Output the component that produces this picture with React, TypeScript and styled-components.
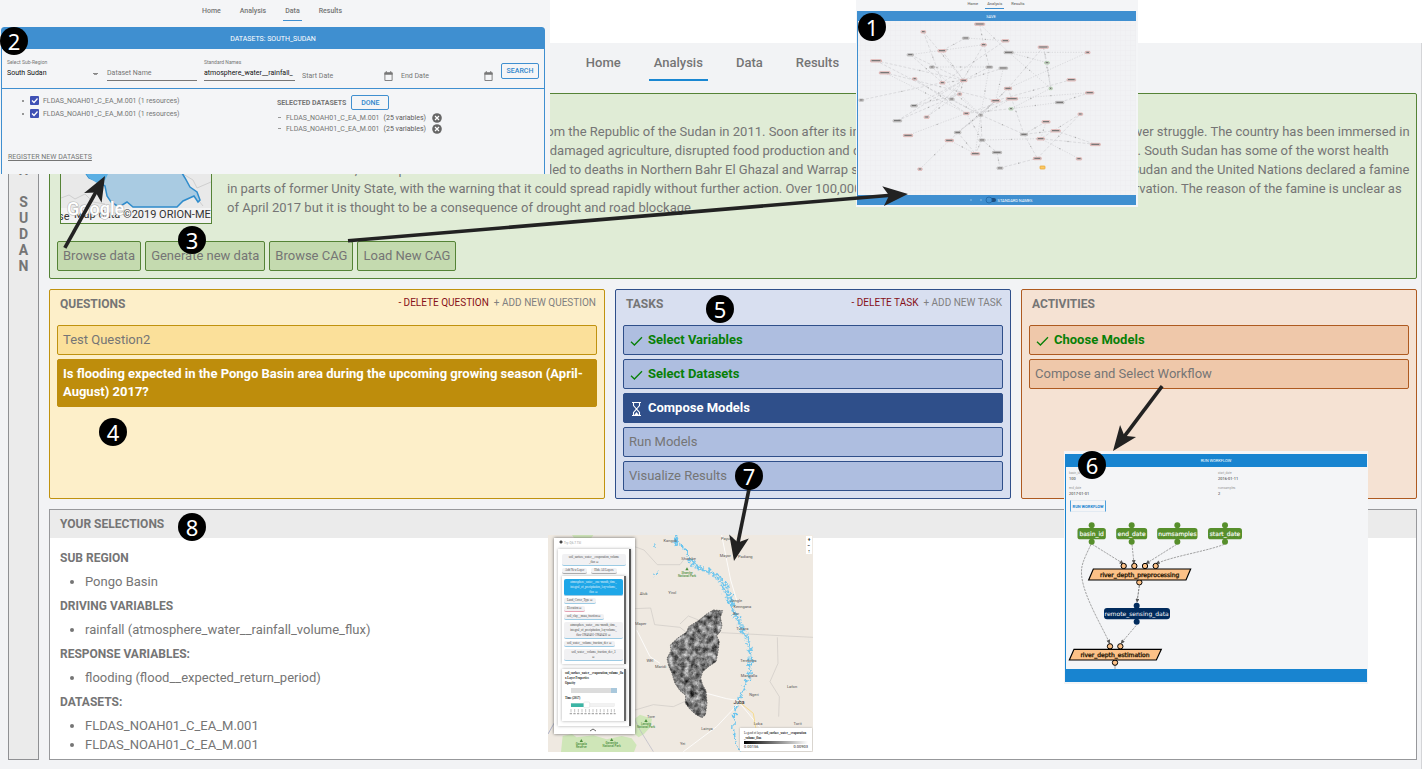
import React from "react";
import styled, { createGlobalStyle, css } from "styled-components";

const GlobalStyle = createGlobalStyle`
  * { box-sizing: border-box; }
  body { margin: 0; background: #fff; font-family: Roboto, "Liberation Sans", sans-serif; font-size: 13px; color: #757575; }
  button, input, select { font: inherit; color: inherit; margin: 0; }
  ul { list-style: none; margin: 0; padding: 0; }
  h2, h3, p { margin: 0; font-size: inherit; }
  a { color: inherit; text-decoration: none; }
`;

/* ---------- page ---------- */

const Page = styled.div`
  position: relative;
  display: flex;
  flex-direction: column;
  min-height: 100vh;
  padding: 43px 1px 0 0;
  overflow: hidden;
`;
const AppShell = styled.div`
  flex: 1;
  display: flex;
  flex-direction: column;
  background: #f2f3f5;
  border-right: 1px solid #d4d5d8;
  padding: 0 4px 10px 8px;
`;
const Nav = styled.nav`
  display: flex;
  justify-content: center;
  align-items: flex-start;
  gap: 23px;
  height: 50px;
  padding-top: 11px;
`;
const Tab = styled.a<{ $active?: boolean }>`
  padding: 0 5px 7px;
  line-height: 18px;
  font-weight: 500;
  border-bottom: 2px solid ${(p) => (p.$active ? "#1a87d2" : "transparent")};
`;
const Body = styled.div`
  flex: 1;
  display: flex;
  gap: 10px;
`;
const Sidebar = styled.aside`
  flex: none;
  width: 31px;
  padding-top: 4px;
  background: #ebebeb;
  border: 1px solid #8f9093;
  display: flex;
  flex-direction: column;
  align-items: center;
  font-size: 14px;
  line-height: 16px;
  font-weight: 700;
`;
const Letter = styled.span`
  height: 16px;
`;
const Main = styled.main`
  flex: 1;
  min-width: 0;
  display: flex;
  flex-direction: column;
  gap: 10px;
`;

/* ---------- region summary ---------- */

const Summary = styled.section`
  background: #e0ecd6;
  border: 1px solid #558336;
  border-radius: 2px;
  padding: 7px;
`;
const SummaryRow = styled.div`
  display: flex;
  gap: 15px;
  padding: 20px 0 17px 3px;
`;
const MapThumb = styled.div`
  flex: none;
  width: 152px;
  height: 103px;
  border: 1px solid #558336;
  overflow: hidden;
`;
const Story = styled.p`
  flex: 1;
  min-width: 0;
  padding-top: 1px;
  line-height: 19px;
`;
const Line = styled.span`
  display: block;
  white-space: nowrap;
`;
const Actions = styled.div`
  display: flex;
  gap: 4px;
`;
const ActionButton = styled.button`
  padding: 5px;
  line-height: 18px;
  background: #c4daaf;
  border: 1px solid #558336;
  border-radius: 2px;
`;

/* ---------- panels ---------- */

type Tone = "gold" | "blue" | "rust";
const tones = {
  gold: { bg: "#fdefc9", item: "#fbe09a", edge: "#c0920f", on: "#be8d0c" },
  blue: { bg: "#d8dff0", item: "#aebee0", edge: "#2f4f8a", on: "#2f4f8a" },
  rust: { bg: "#f5e2d3", item: "#efc8aa", edge: "#ae5a20", on: "#ae5a20" },
};

const Panels = styled.div`
  display: grid;
  grid-template-columns: 139fr 99fr 99fr;
  gap: 10px;
`;
const Panel = styled.section<{ $tone: Tone }>`
  background: ${(p) => tones[p.$tone].bg};
  border: 1px solid ${(p) => tones[p.$tone].edge};
  border-radius: 2px;
  padding: 4px 7px 7px;
`;
const PanelHead = styled.header`
  display: flex;
  justify-content: space-between;
  height: 31px;
  padding: 0 1px 0 3px;
  line-height: 20px;
`;
const PanelTitle = styled.h2`
  font-weight: 700;
  font-size: 12px;
`;
const PanelLinks = styled.div`
  display: flex;
  gap: 5px;
`;
const LinkButton = styled.button<{ $danger?: boolean }>`
  padding: 0;
  border: 0;
  background: none;
  height: 18px;
  line-height: 18px;
  font-size: 10px;
  color: ${(p) => (p.$danger ? "#861018" : "#808080")};
`;
const Items = styled.ul`
  display: flex;
  flex-direction: column;
  gap: 4px;
`;
const ItemButton = styled.button<{ $tone: Tone; $state?: "done" | "on" }>`
  display: flex;
  align-items: center;
  gap: 5px;
  width: 100%;
  padding: 5px;
  line-height: 18px;
  text-align: left;
  border-radius: 2px;
  border: 1px solid ${(p) => tones[p.$tone].edge};
  background: ${(p) => tones[p.$tone].item};
  ${(p) => p.$state === "done" && css`color: #078007; font-weight: 700;`}
  ${(p) => p.$state === "on" && css`color: #fff; font-weight: 700; background: ${tones[p.$tone].on}; border-color: ${tones[p.$tone].on};`}
`;

const Check = () => (
  <svg width="14" height="14" viewBox="0 0 14 14" fill="none" stroke="#078007" strokeWidth="1.3" aria-hidden="true">
    <path d="M2 8.8 5.4 12 13 4.2" />
  </svg>
);
const Hourglass = () => (
  <svg width="14" height="16" viewBox="0 0 14 16" fill="none" stroke="#fff" strokeWidth="1.1" aria-hidden="true">
    <path d="M3 2.5h9M3 15.5h9M4.5 2.5v3L7 8.5c.4.4.4.8 0 1.2L4.500 12.500v3M10.500 2.500v3L8 8.500c-.4.4-.4.8 0 1.200l2.500 2.800v3" />
    <path d="M5 15.300 7.500 12l2.500 3.300Z" fill="#fff" stroke="none" />
  </svg>
);

/* ---------- selections ---------- */

const Selections = styled.section`
  flex: 1;
  background: #fff;
  border: 1px solid #97989b;
`;
const SelectionsHead = styled.h2`
  padding: 4px 10px;
  line-height: 20px;
  font-size: 12px;
  font-weight: 700;
  background: #ebebeb;
`;
const SelectionsBody = styled.div`
  padding: 10px 10px 0;
  line-height: 19px;
`;
const GroupTitle = styled.h3`
  font-size: 12px;
  font-weight: 700;
  line-height: 20px;
`;
const GroupList = styled.ul`
  list-style: disc;
  padding: 4px 0 5px 25px;
`;

/* ---------- overlays ---------- */

const Overlay = styled.section<{ $x: number; $y: number; $w: number; $h: number }>`
  position: absolute;
  left: ${(p) => p.$x}px;
  top: ${(p) => p.$y}px;
  width: ${(p) => p.$w}px;
  height: ${(p) => p.$h}px;
  background: #f4f5f7;
  overflow: hidden;
`;
const Badge = styled.span<{ $x: number; $y: number }>`
  position: absolute;
  left: ${(p) => p.$x}px;
  top: ${(p) => p.$y}px;
  width: 28px;
  height: 28px;
  border-radius: 50%;
  background: #000;
  color: #fff;
  font: 22px/28px "Noto Sans", sans-serif;
  text-align: center;
`;
const ArrowLayer = styled.svg`
  position: absolute;
  left: 0;
  top: 0;
  pointer-events: none;
`;

const Arrow = ({ from, to }: { from: [number, number]; to: [number, number] }) => {
  const angle = (Math.atan2(to[1] - from[1], to[0] - from[0]) * 180) / Math.PI;
  const len = Math.hypot(to[0] - from[0], to[1] - from[1]);
  return (
    <g transform={`translate(${to[0]} ${to[1]}) rotate(${angle})`} fill="#222">
      <rect x={-len} y={-2} width={len - 17} height={3.600} />
      <path d="M0 0-25-10-19 0-25 10Z" />
    </g>
  );
};

/* dataset browser */
const MiniNav = styled.nav<{ $size: number; $gap: number; $h: number; $end: number }>`
  display: flex;
  justify-content: center;
  gap: ${(p) => p.$gap}px;
  height: ${(p) => p.$h}px;
  padding-right: ${(p) => p.$end}px;
  font-size: ${(p) => p.$size}px;
  font-weight: 500;
`;
const MiniTab = styled.a<{ $active?: boolean; $h: number; $line: number }>`
  height: ${(p) => p.$h}px;
  line-height: ${(p) => p.$line}px;
  padding: 0 2px;
  border-bottom: 1px solid ${(p) => (p.$active ? "#3f8fd0" : "transparent")};
`;
const DataFrame = styled.div`
  height: 150px;
  margin: 0 5px 0 1px;
  border: 1px solid #3f8fd0;
  border-radius: 3px 3px 0 0;
  font-size: 7px;
`;
const DataTitle = styled.h2`
  height: 21px;
  line-height: 22px;
  background: #3f8fd0;
  color: #fff;
  font-weight: 400;
  text-align: center;
`;
const SearchForm = styled.form`
  display: grid;
  grid-template-columns: 93px 90px 91px 92px 93px 38px;
  align-items: start;
  column-gap: 7px;
  height: 40px;
  padding: 9px 5px 0;
  border-bottom: 1px solid #3f8fd0;
`;
const Field = styled.label`
  display: flex;
  flex-direction: column;
  height: 23px;
  font-size: 5px;
  line-height: 8px;
`;
const FieldCaption = styled.span`
  flex: none;
  height: 8px;
`;
const TinyInput = styled.input<{ $line?: boolean }>`
  width: 100%;
  height: 16px;
  padding: 0;
  border: 0;
  border-bottom: 1px solid ${(p) => (p.$line ? "#777" : "transparent")};
  background: none;
  font-size: 7px;
  color: #111;
  &::placeholder { color: #757575; opacity: 1; }
`;
const TinySelect = styled.select`
  appearance: none;
  width: 100%;
  height: 14px;
  padding: 0;
  border: 0;
  background: linear-gradient(#888, #888) no-repeat 86px 7px / 5px 1px, linear-gradient(#999, #999) no-repeat 87px 8px / 3px 1px;
  font-size: 7px;
  color: #111;
`;
const DateBox = styled.span`
  flex: none;
  display: flex;
  align-items: center;
  height: 20px;
  padding-right: 1px;
`;
const OutlineButton = styled.button<{ $h: number }>`
  height: ${(p) => p.$h}px;
  width: 38px;
  padding: 0;
  border: 1px solid #3f8fd0;
  border-radius: 2px;
  background: none;
  color: #2f86cc;
  font-size: 7px;
  font-weight: 500;
`;
const SearchSlot = styled.div`
  padding-top: 5px;
`;
const DataColumns = styled.div`
  display: grid;
  grid-template-columns: 270px 1fr;
  height: 62px;
  padding: 5px 5px 0;
`;
const Resources = styled.ul`
  padding: 0 0 0 15px;
`;
const ResourceRow = styled.li`
  display: flex;
  align-items: center;
  height: 13px;
  gap: 4px;
  &::before { content: ""; width: 2px; height: 2px; border-radius: 1px; background: #777; margin-right: 2px; }
`;
const Tick = styled.input`
  appearance: none;
  width: 9px;
  height: 9px;
  border-radius: 1px;
  background: #3f51b5;
  background-image: url("data:image/svg+xml,%3Csvg xmlns='http://www.w3.org/2000/svg' viewBox='0 0 9 9'%3E%3Cpath d='M2 4.500 4 6.500 7.500 2.500' fill='none' stroke='white' stroke-width='1.200'/%3E%3C/svg%3E");
`;
const TickLabel = styled.label`
  display: flex;
  align-items: center;
  gap: 4px;
`;
const ChosenHead = styled.div`
  display: flex;
  align-items: center;
  gap: 5px;
  height: 17px;
  margin-bottom: 1px;
  font-weight: 700;
`;
const ChosenRow = styled.li`
  display: flex;
  align-items: center;
  height: 11px;
  &::before { content: ""; width: 3px; height: 1px; background: #999; margin: 0 5px 0 1px; }
`;
const Strong = styled.span`
  color: #5c5c5c;
  margin: 0 6px 0 4px;
`;
const IconButton = styled.button`
  display: flex;
  padding: 0;
  border: 0;
  background: none;
`;
const Register = styled.a`
  margin-left: 6px;
  line-height: 12px;
  text-decoration: underline;
`;

const CalendarIcon = () => (
  <svg width="10" height="12" viewBox="0 0 10 12" aria-hidden="true">
    <path d="M1 2.500h8v8.500H1z" fill="none" stroke="#777" />
    <path d="M.5 2h9v2.500h-9zM2 .5h1v2H2zM7 .5h1v2H7z" fill="#777" />
  </svg>
);
const RemoveIcon = () => (
  <svg width="10" height="10" viewBox="0 0 10 10" aria-hidden="true">
    <circle cx="5" cy="5" r="4.800" fill="#666" />
    <path d="m3 3 4 4M7 3 3 7" stroke="#fff" strokeWidth="1.200" />
  </svg>
);

const DatasetBrowser = () => (
  <Overlay $x={0} $y={0} $w={550} $h={174}>
    <MiniNav $size={7} $gap={15} $h={27} $end={6}>
      <MiniTab href="#" $h={21} $line={22}>Home</MiniTab>
      <MiniTab href="#" $h={21} $line={22}>Analysis</MiniTab>
      <MiniTab href="#" $h={21} $line={22} $active>Data</MiniTab>
      <MiniTab href="#" $h={21} $line={22}>Results</MiniTab>
    </MiniNav>
    <DataFrame>
      <DataTitle>DATASETS: SOUTH_SUDAN</DataTitle>
      <SearchForm>
        <Field>
          <FieldCaption>Select Sub-Region</FieldCaption>
          <TinySelect defaultValue="ss"><option value="ss">South Sudan</option></TinySelect>
        </Field>
        <Field>
          <FieldCaption />
          <TinyInput $line placeholder="Dataset Name" aria-label="Dataset Name" />
        </Field>
        <Field>
          <FieldCaption>Standard Names</FieldCaption>
          <TinyInput $line defaultValue="atmosphere_water__rainfall_" />
        </Field>
        <Field>
          <FieldCaption />
          <DateBox><TinyInput placeholder="Start Date" aria-label="Start Date" /><CalendarIcon /></DateBox>
        </Field>
        <Field>
          <FieldCaption />
          <DateBox><TinyInput placeholder="End Date" aria-label="End Date" /><CalendarIcon /></DateBox>
        </Field>
        <SearchSlot><OutlineButton type="button" $h={16}>SEARCH</OutlineButton></SearchSlot>
      </SearchForm>
      <DataColumns>
        <Resources>
          {[0, 1].map((i) => (
            <ResourceRow key={i}>
              <TickLabel><Tick type="checkbox" defaultChecked />FLDAS_NOAH01_C_EA_M.001 (1 resources)</TickLabel>
            </ResourceRow>
          ))}
        </Resources>
        <div>
          <ChosenHead>SELECTED DATASETS<OutlineButton type="button" $h={15}>DONE</OutlineButton></ChosenHead>
          <ul>
            {[0, 1].map((i) => (
              <ChosenRow key={i}>
                FLDAS_NOAH01_C_EA_M.001 <Strong>(25 variables)</Strong>
                <IconButton aria-label="Remove dataset"><RemoveIcon /></IconButton>
              </ChosenRow>
            ))}
          </ul>
        </div>
      </DataColumns>
      <Register href="#">REGISTER NEW DATASETS</Register>
    </DataFrame>
  </Overlay>
);

/* causal graph */
const GraphBar = styled.div<{ $h: number }>`
  display: flex;
  align-items: center;
  justify-content: center;
  height: ${(p) => p.$h}px;
  padding-right: 12px;
  background: #3f8fd0;
  color: #fff;
  font-size: 4px;
`;
const GraphFrame = styled.div`
  margin: 0 2px 0 1px;
  border-left: 1px solid #3f8fd0;
`;
const Drawing = styled.svg`
  display: block;
`;

const RED = "#d98b87";
const GRAY = "#9a9a9a";
const GREEN = "#83bb7c";
const nodes: [number, number, number, string][] = [
  [389, 72, 30, RED], [220, 95, 14, RED], [347, 114, 20, GRAY], [401, 134, 16, RED], [466, 122, 22, RED],
  [181, 164, 19, GRAY], [276, 152, 24, RED], [476, 157, 28, GRAY], [580, 141, 31, RED], [713, 157, 14, RED],
  [78, 182, 33, RED], [104, 218, 32, RED], [246, 201, 15, GRAY], [418, 201, 20, GRAY], [460, 204, 26, GRAY],
  [591, 188, 14, GREEN], [194, 236, 13, RED], [277, 248, 15, RED], [341, 241, 20, RED], [474, 265, 22, RED],
  [602, 265, 10, GREEN], [664, 239, 26, RED], [719, 278, 25, RED], [34, 300, 14, GRAY], [192, 317, 20, GRAY],
  [305, 297, 15, GRAY], [329, 282, 12, RED], [437, 302, 26, RED], [486, 296, 34, RED], [483, 326, 12, GREEN],
  [629, 307, 26, GRAY], [142, 362, 26, GRAY], [230, 351, 15, RED], [349, 340, 17, RED], [392, 345, 12, GRAY],
  [588, 365, 24, RED], [691, 342, 14, RED], [174, 406, 28, RED], [323, 397, 20, GRAY], [298, 421, 25, RED],
  [396, 420, 18, GRAY], [522, 403, 22, GRAY], [572, 416, 23, RED], [617, 392, 28, RED], [736, 433, 30, RED],
  [376, 461, 26, RED], [441, 457, 28, GRAY], [562, 475, 24, RED], [687, 476, 16, RED], [450, 504, 18, GRAY],
  [210, 507, 13, RED],
];
const edges: [number, number][] = [
  [0, 7], [0, 3], [1, 17], [2, 4], [2, 6], [3, 13], [5, 3], [5, 17], [6, 18], [7, 20], [8, 19], [8, 15], [9, 19],
  [10, 18], [11, 27], [12, 34], [13, 18], [14, 18], [13, 34], [15, 20], [16, 33], [17, 34], [17, 18], [18, 24],
  [18, 32], [19, 27], [19, 34], [20, 29], [21, 27], [22, 30], [22, 28], [23, 17], [24, 26], [25, 34], [27, 34],
  [27, 38], [28, 34], [28, 33], [29, 33], [30, 29], [31, 26], [31, 18], [33, 40], [34, 41], [34, 40], [34, 45],
  [35, 41], [36, 42], [35, 42], [43, 41], [43, 44], [37, 33], [38, 34], [39, 27], [39, 45], [40, 45], [41, 47],
  [42, 48], [46, 49], [49, 47], [40, 42], [42, 44], [19, 41], [7, 15], [1, 18], [18, 5], [14, 27], [3, 25],
  [4, 17], [12, 13], [26, 18], [32, 25], [50, 39], [38, 45], [40, 46], [9, 7], [8, 20], [47, 36], [11, 33], [10, 34],
];

const CausalGraph = () => (
  <Overlay $x={856} $y={0} $w={282} $h={207}>
    <MiniNav $size={4} $gap={5} $h={11} $end={2}>
      <MiniTab href="#" $h={9} $line={8}>Home</MiniTab>
      <MiniTab href="#" $h={9} $line={8} $active>Analysis</MiniTab>
      <MiniTab href="#" $h={9} $line={8}>Results</MiniTab>
    </MiniNav>
    <GraphFrame>
      <GraphBar $h={10}>SAVE</GraphBar>
      <Drawing width="278" height="174" viewBox="24 63 834 522" aria-label="Causal graph">
        <defs>
          <pattern id="grid" width="15" height="15" patternUnits="userSpaceOnUse">
            <path d="M0 .5h15M.5 0v15" stroke="#e9eaed" strokeWidth="1.500" fill="none" />
          </pattern>
        </defs>
        <rect x="24" y="63" width="834" height="522" fill="#f1f2f4" />
        <rect x="24" y="63" width="834" height="522" fill="url(#grid)" />
        {edges.map(([a, b], i) => (
          <g key={i}>
            <line x1={nodes[a][0]} y1={nodes[a][1]} x2={nodes[b][0]} y2={nodes[b][1]} stroke="#cbcbce" strokeWidth="1.800" strokeDasharray={i % 3 ? "9 5" : "4 4"} />
            <circle cx={(nodes[a][0] + nodes[b][0]) / 2} cy={(nodes[a][1] + nodes[b][1]) / 2} r="2" fill="#aaa" />
          </g>
        ))}
        {nodes.map(([x, y, w, c], i) => (
          <g key={i}>
            <rect x={x - w / 2} y={y - 3} width={w} height="7" rx="2" fill="#d9d5d5" stroke={c} strokeWidth="1.500" />
            <line x1={x - w / 2 + 3} x2={x + w / 2 - 3} y1={y} y2={y} stroke="#666" strokeWidth="3" />
          </g>
        ))}
        <rect x="570" y="498" width="15" height="9" rx="2" fill="#fbc96a" stroke="#e9a21f" strokeWidth="2" />
      </Drawing>
      <GraphBar $h={10}>
        <svg width="48" height="8" viewBox="0 0 48 8" aria-hidden="true">
          <path d="M20 4h2M30 4h2" stroke="#8dbbe2" />
          <rect x="38" y="2" width="8" height="4" rx="2" fill="#1d4f80" />
          <circle cx="39" cy="4" r="3" fill="#3f8fd0" stroke="#1f66a5" strokeWidth=".8" />
        </svg>
        STANDARD NAMES
      </GraphBar>
    </GraphFrame>
  </Overlay>
);

/* workflow */
const FlowFrame = styled.div`
  margin: 3px 1px 0 1px;
`;
const FlowBar = styled.h2`
  height: 13px;
  line-height: 13px;
  background: #1884d0;
  color: #fff;
  text-align: center;
  font-size: 4px;
  font-weight: 400;
`;
const FlowBody = styled.div`
  height: 202px;
  border-left: 1px solid #1884d0;
`;
const FlowFields = styled.dl`
  display: grid;
  grid-template-columns: 1fr 1fr;
  margin: 0;
  padding: 3px 0 0 3px;
  height: 33px;
`;
const FlowField = styled.div`
  height: 15px;
  font-size: 4px;
  line-height: 6px;
`;
const Term = styled.dt`
  color: #999;
  font-size: 3px;
`;
const Value = styled.dd`
  margin: 0;
  color: #333;
`;
const FlowButton = styled.button`
  display: block;
  margin: 0 0 0 4px;
  width: 36px;
  height: 12px;
  padding: 0;
  border: 1px solid #4ea0dc;
  border-top-color: #e2eaf2;
  border-bottom-color: #e2eaf2;
  background: none;
  color: #1884d0;
  font-size: 4px;
  font-weight: 700;
`;
const inputs: [number, number, string][] = [[110, 85, "basin_id"], [230, 93, "end_date"], [367, 121, "numsamples"], [510, 102, "start_date"]];
const Port = ({ x, y }: { x: number; y: number }) => <circle cx={x} cy={y} r="8" fill="#fcc187" stroke="#000" strokeWidth="3" />;

const Workflow = () => (
  <Overlay $x={1064} $y={451} $w={304} $h={233}>
    <FlowFrame>
      <FlowBar>RUN WORKFLOW</FlowBar>
      <FlowBody>
        <FlowFields>
          <FlowField><Term>basin_id</Term><Value>100</Value></FlowField>
          <FlowField><Term>start_date</Term><Value>2016-01-11</Value></FlowField>
          <FlowField><Term>end_date</Term><Value>2017-01-01</Value></FlowField>
          <FlowField><Term>numsamples</Term><Value>2</Value></FlowField>
        </FlowFields>
        <FlowButton>RUN WORKFLOW</FlowButton>
        <Drawing width="200" height="157" viewBox="33 199 600 471" fontFamily="DejaVu Sans" fontSize="18" textAnchor="middle" aria-label="Workflow diagram">
          <defs>
            <marker id="tip" viewBox="0 0 10 10" refX="9" refY="5" markerWidth="14" markerHeight="12" markerUnits="userSpaceOnUse" orient="auto">
              <path d="M0 0 10 5 0 10Z" fill="#555" />
            </marker>
          </defs>
          <g fill="none" stroke="#777" strokeWidth="2" strokeDasharray="7 3" markerEnd="url(#tip)">
            <path d="M112 296 205 354" />
            <path d="M231 296 237 354" />
            <path d="M365 296 273 354" />
            <path d="M508 296C450 318 360 330 303 354" />
            <path d="M108 296C85 345 77 360 80 390C85 450 140 540 164 593" />
            <path d="M253 420 246 470" stroke="#333" />
            <path d="M243 540 198 593" />
          </g>
          <path d="M180 658v14" stroke="#777" strokeWidth="2" />
          {inputs.map(([x, w, name]) => (
            <g key={name}>
              <g fill="#578f2c">
                <circle cx={x} cy="239" r="9" /><circle cx={x} cy="288" r="9" />
                <rect x={x - w / 2} y="247" width={w} height="34" rx="8" />
              </g>
              <text x={x} y="271" fill="#fff" stroke="#fff" strokeWidth=".4">{name}</text>
            </g>
          ))}
          {[206, 238, 270, 302].map((x) => <Port key={x} x={x} y={361} />)}
          <Port x={253} y={410} />
          <path d="M115 370H407L393 403H101Z" fill="#fcc187" stroke="#000" strokeWidth="3.500" />
          <text x="254" y="393" fill="#2a1a08" stroke="#2a1a08" strokeWidth="1">river_depth_preprocessing</text>
          <g fill="#012b5d">
            <circle cx="245" cy="480" r="9" /><circle cx="245" cy="528" r="9" />
            <rect x="147" y="487" width="198" height="34" rx="9" />
          </g>
          <text x="245" y="511" fill="#fff">remote_sensing_data</text>
          {[165, 196].map((x) => <Port key={x} x={x} y={602} />)}
          <Port x={180} y={651} />
          <path d="M57 611H319L304 643H43Z" fill="#fcc187" stroke="#000" strokeWidth="3.500" />
          <text x="180" y="634" fill="#2a1a08" stroke="#2a1a08" strokeWidth="1">river_depth_estimation</text>
        </Drawing>
      </FlowBody>
      <FlowBar as="div" />
    </FlowFrame>
  </Overlay>
);

/* results map */
const MapCanvas = styled.div`
  position: relative;
  width: 265px;
  height: 217px;
`;
const LayerPanel = styled.div`
  position: absolute;
  left: 6px;
  top: 3px;
  width: 81px;
  height: 196px;
  padding: 1px 4px 0 4px;
  background: #fff;
  box-shadow: 0 0 3px #666;
  font: 3px/5px "Liberation Serif", serif;
  color: #444;
`;
const LayerSearch = styled.input`
  display: block;
  width: 60px;
  height: 7px;
  margin-left: 1px;
  padding: 0 0 0 5px;
  border: 0;
  background: radial-gradient(circle at 2px 3px, #444 1px, transparent 2px);
  font: 3px Roboto, sans-serif;
  &::placeholder { color: #999; opacity: 1; }
`;
const LayerScroll = styled.div`
  height: 177px;
  margin-top: 3px;
  padding: 5px 3px 0 4px;
  border-right: 2px solid #555;
  box-shadow: 0 0 3px #aaa;
`;
const Chip = styled.button<{ $on?: boolean; $edge?: string; $wide?: boolean }>`
  display: block;
  width: ${(p) => (p.$wide ? "100%" : "auto")};
  padding: ${(p) => (p.$wide ? "1px 1px 0" : "0 3px")};
  border: 0;
  border-bottom: 1px solid ${(p) => p.$edge ?? "#9ccbe4"};
  border-radius: 2px;
  background: ${(p) => (p.$on ? "#1ea7e8" : "#f1f1f3")};
  color: ${(p) => (p.$on ? "#e9f6fd" : "#444")};
  font: 3px/5px "Liberation Serif", serif;
  text-align: center;
  white-space: nowrap;
`;
const ChipRow = styled.div`
  display: flex;
  gap: 4px;
  margin: 2px 0;
`;
const LayerList = styled.div`
  display: flex;
  flex-direction: column;
  align-items: flex-start;
  gap: 2px;
  height: 88px;
  padding: 3px 1px 0 2px;
  border-right: 2px solid #666;
  box-shadow: 0 0 3px #aaa;
  overflow: hidden;
`;
const LayerProps = styled.div`
  margin-top: 5px;
  height: 52px;
  padding: 2px 3px 0;
  border-right: 2px solid #666;
  box-shadow: 0 0 3px #aaa;
  color: #222;
  white-space: nowrap;
`;
const Bold = styled.b`
  display: block;
`;
const Opacity = styled.div`
  height: 5px;
  margin: 2px 4px 3px 6px;
  background: linear-gradient(90deg, #dcdcdc 88%, #a9c8dc 88%);
`;
const Legend = styled.div`
  position: absolute;
  right: 1px;
  bottom: 1px;
  width: 72px;
  height: 23px;
  padding: 3px 4px 0;
  background: #fff;
  box-shadow: 0 0 2px #aaa;
  font: 3px/5px "Liberation Serif", serif;
  color: #222;
  white-space: nowrap;
`;
const Ramp = styled.div`
  height: 3px;
  background: linear-gradient(90deg, #000, #fff);
`;
const RampLabels = styled.div`
  display: flex;
  justify-content: space-between;
  font: 400 4px/5px Roboto, sans-serif;
`;
const ZoomControl = styled.div`
  position: absolute;
  right: 1px;
  top: 1px;
  width: 6px;
  display: flex;
  flex-direction: column;
  background: #fff;
`;
const ZoomButton = styled.button`
  padding: 0;
  border: 0;
  background: none;
  color: #222;
  font-size: 5px;
  font-weight: 700;
  line-height: 6px;
`;

const places: [number, number, string][] = [
  [391, 36, "Kangok"], [446, 91, "Shambe"], [397, 193, "Yirol"], [311, 194, "Aluk"], [302, 284, "Maper"], [330, 397, "WEI"],
  [362, 415, "Maridi"], [561, 30, "Payuel"], [556, 80, "Mayor"], [616, 85, "Padiang"], [588, 215, "Jongle"], [607, 233, "Kenngana"],
  [588, 256, "Bor"], [607, 300, "Tukara"], [625, 396, "Terekeka"], [627, 441, "Mangalla"], [642, 498, "Ngeri"], [756, 473, "Lafon"],
  [773, 586, "Torit"], [654, 586, "Loka"], [501, 599, "Lainya"], [428, 644, "Yei"], [333, 565, "Tore"],
];
const parks: [number, number, string, string][] = [
  [441, 131, "Shambe", "National Park"], [318, 586, "Lantoto", "National Park"], [124, 646, "Gangala", "Reserve"], [215, 643, "Garamba", "National Park"],
];
const RIVER = "M405 12 412 38 438 62 450 92 470 112 505 122 535 146 555 178 570 212 580 240 592 262 600 292 618 316 630 350 632 400 628 440 612 475 598 508 584 545 581 600 588 635 602 668";
const BASIN = "M520 240 548 242 541 262 546 285 541 305 530 317 538 335 534 365 528 395 508 408 488 425 482 445 488 465 498 482 501 520 496 555 486 563 468 554 450 538 436 520 437 496 420 482 405 460 395 428 386 408 381 385 393 362 391 345 412 325 440 306 446 290 475 272 500 252Z";

const ResultsMap = () => (
  <Overlay $x={548} $y={535} $w={265} $h={217}>
    <MapCanvas>
      <Drawing width="265" height="217" viewBox="24 15 795 651" aria-label="Results map">
        <defs>
          <filter id="terrain" x="0" y="0" width="100%" height="100%" colorInterpolationFilters="sRGB">
            <feTurbulence type="fractalNoise" baseFrequency=".06" numOctaves="5" seed="8" />
            <feColorMatrix values="0 1.100 0 0 -.06  0 1.100 0 0 -.06  0 1.100 0 0 -.06  0 0 0 0 1" />
            <feComposite in2="SourceGraphic" operator="in" />
          </filter>
          <filter id="braid" x="-20%" y="-5%" width="140%" height="110%">
            <feTurbulence type="fractalNoise" baseFrequency=".07" numOctaves="3" seed="3" />
            <feDisplacementMap in="SourceGraphic" scale="26" xChannelSelector="R" yChannelSelector="G" />
          </filter>
        </defs>
        <rect x="24" y="15" width="795" height="651" fill="#efe9e1" />
        <g fill="#cfe6b8">
          <path d="M63 666 68 618 96 612 110 622 160 616 200 628 245 618 275 625 290 645 282 666Z" />
          <path d="M284 566 300 554 336 566 332 590 312 612 296 622 284 612Z" />
          <path d="M96 15h64l-6 9h-52z" />
        </g>
        <g fill="none" stroke="#cdc8c4" strokeWidth="2">
          <path d="M284 50 312 60 352 104 420 104 432 88" />
          <path d="M284 236 332 234 344 284 420 292 440 308" />
          <path d="M420 282 445 258 476 270M543 308 819 322" />
          <path d="M712 322 714 400 690 455 718 500 716 560" />
          <path d="M285 540 340 524 400 530 440 512" />
          <path d="M24 612 45 575" stroke="#8b95bb" />
          <path d="M284 568 300 600 340 665" stroke="#b5b5c4" />
        </g>
        <g fill="none" stroke="#fff" strokeWidth="2.500">
          <path d="M545 15 572 150 590 210M360 400 330 380 290 300" />
          <path d="M598 512 560 506 500 490M596 520 530 590 430 665M598 518 700 640 790 610" />
        </g>
        <path d="M598 516 640 550 650 610" fill="none" stroke="#f7dc8c" strokeWidth="3" />
        <g fill="none" stroke="#6cc5ee" filter="url(#braid)">
          <path d={RIVER} strokeWidth="4" />
          <path d="M450 92 470 112 505 122 535 146 555 178 570 212 580 240 592 262 600 292 618 316 630 350 632 400 628 440" strokeWidth="14" strokeDasharray="5 7" opacity=".75" />
          <path d="M408 14 412 42" strokeWidth="10" />
          <path d="M520 122 560 160 572 200" strokeWidth="6" strokeDasharray="8 4" />
          <path d="M345 40v12M350 128l-4 12" strokeWidth="4" />
        </g>
        <path d={BASIN} fill="#777" filter="url(#terrain)" />
        <path d={BASIN} fill="none" stroke="#444" strokeWidth="2" strokeDasharray="5 3" />
        <g fontFamily="Roboto" fontSize="12" textAnchor="middle" fill="#555">
          {places.map(([x, y, name]) => <text key={name} x={x} y={y}>{name}</text>)}
          <text x="597" y="521" fontSize="15" fill="#222">Juba</text>
        </g>
        <g fontFamily="Roboto" fontSize="9" fontWeight="500" textAnchor="middle" fill="#4a8f3c">
          {parks.map(([x, y, a, b]) => (
            <g key={a}>
              <path d={`M${x} ${y - 19}l5 9h-10z`} />
              <text x={x} y={y}>{a}</text>
              <text x={x} y={y + 9}>{b}</text>
            </g>
          ))}
        </g>
      </Drawing>
      <LayerPanel>
        <LayerSearch placeholder="Try: Q6.7.TSI" aria-label="Search" />
        <LayerScroll>
          <Chip $wide>soil_surface_water__evaporation_volume<br />_flux ⊙</Chip>
          <ChipRow><Chip $edge="#aaa">Add New Layer</Chip><Chip $edge="#aaa">Hide All Layers</Chip></ChipRow>
          <LayerList>
            <Chip $on $wide>atmosphere_water__one-month_time_<br />integral_of_precipitation_leq-volume_<br />flux ⊙</Chip>
            <Chip>Land_Cover_Type ⊙</Chip>
            <Chip $edge="#e6a3b4">Elevation ⊙</Chip>
            <Chip>soil_clay__mass_fraction ⊙</Chip>
            <Chip $wide>atmosphere_water__one-month_time_<br />integral_of_precipitation_leq-volume_<br />flux-19840401-19840430 ⊙</Chip>
            <Chip>soil_water__volume_fraction_dec ⊙</Chip>
            <Chip $wide>soil_water__volume_fraction_dec_3<br />⊙</Chip>
          </LayerList>
          <LayerProps>
            <Bold>soil_surface_water__evaporation_volume_flu</Bold>
            <Bold>x Layer Properties</Bold>
            <Bold>Opacity</Bold>
            <Opacity />
            <Bold>Time (2017)</Bold>
            <Drawing width="52" height="14" viewBox="0 0 156 42" aria-hidden="true">
              <rect x="18" y="8" width="130" height="9" fill="#f2f2f2" stroke="#ddd" />
              <rect x="18" y="7" width="40" height="11" fill="#3cb5a5" />
              <rect x="56" y="3" width="18" height="17" rx="3" fill="#fff" stroke="#ccc" />
              <path d="M18 24v10M29 24v10M40 24v10M51 24v10M62 24v10M73 24v10M84 24v10M95 24v10M106 24v10M117 24v10M128 24v10M139 24v10M148 24v10" stroke="#888" strokeWidth="1.500" />
              <path d="M14 38h138" stroke="#aaa" strokeWidth="4" strokeDasharray="7 4" />
            </Drawing>
          </LayerProps>
        </LayerScroll>
        <Drawing width="70" height="6" viewBox="0 0 70 6" aria-hidden="true">
          <path d="M32 5 35 3l3 2" fill="none" stroke="#666" />
        </Drawing>
      </LayerPanel>
      <ZoomControl>
        <ZoomButton aria-label="Zoom in">+</ZoomButton>
        <ZoomButton aria-label="Zoom out">−</ZoomButton>
        <ZoomButton aria-label="Reset north">↑</ZoomButton>
      </ZoomControl>
      <Legend>
        Legend of layer <b>soil_surface_water__evaporation<br />_volume_flux</b>
        <Ramp />
        <RampLabels><span>0.00156</span><span>0.00903</span></RampLabels>
      </Legend>
    </MapCanvas>
  </Overlay>
);

/* ---------- content ---------- */

const story = [
  "South Sudan is a country which gained independence from the Republic of the Sudan in 2011. Soon after its independence, it was plunged into a bitter civil power struggle. The country has been immersed in",
  "conflict for several years. The fighting and drought have damaged agriculture, disrupted food production and displaced more than two million of its inhabitants. South Sudan has some of the worst health",
  "indicators in the world, and is prone to famines. Famine led to deaths in Northern Bahr El Ghazal and Warrap states. By March 2017 the Government of South Sudan and the United Nations declared a famine",
  "in parts of former Unity State, with the warning that it could spread rapidly without further action. Over 100,000 people there were said to be on the brink of starvation. The reason of the famine is unclear as",
  "of April 2017 but it is thought to be a consequence of drought and road blockage.",
];

const groups = [
  { title: "SUB REGION", items: ["Pongo Basin"] },
  { title: "DRIVING VARIABLES", items: ["rainfall (atmosphere_water__rainfall_volume_flux)"] },
  { title: "RESPONSE VARIABLES:", items: ["flooding (flood__expected_return_period)"] },
  { title: "DATASETS:", items: ["FLDAS_NOAH01_C_EA_M.001", "FLDAS_NOAH01_C_EA_M.001"] },
];

const badges: [number, number, number][] = [
  [1, 858, 13], [2, 0, 27], [3, 178, 226], [4, 99, 418], [5, 706, 295], [6, 1078, 451], [7, 735, 462], [8, 178, 513],
];

const RegionMap = () => (
  <Drawing width="150" height="101" viewBox="0 0 150 101" aria-label="Map of South Sudan">
    <rect width="150" height="101" fill="#e9e9e9" />
    <path d="M0 76 8 73 14 77 24 72 32 80 44 82M122 52 132 58 136 66 150 60M135 75 142 84" fill="none" stroke="#cfcfcf" />
    <path d="M24 50 28 56 36 59 44 64 46 74 50 80 58 85 66 80 72 85H116L122 79 133 74 137 80 139 78 136 70 129 65 124 56 118 46 80 20H30Z" fill="#a9cbe2" stroke="#2f8ccc" strokeWidth="1.500" />
    <path d="M24 50 28 56 36 61 44 58 48 50Z" fill="#5cb0e4" />
    <rect y="86" width="150" height="15" fill="#f3f3f3" />
    <g fontFamily="Roboto">
      <text x="13" y="96" fontSize="11" fill="#333">Map data ©2019 ORION-ME</text>
      <text x="-3" y="98" fontSize="11" fill="#333">se</text>
      <text x="6" y="93" fontSize="18" fontWeight="500" fill="#fff" stroke="#b8b8b8" strokeWidth="1.200" paintOrder="stroke">Google</text>
    </g>
  </Drawing>
);

export default function App() {
  return (
    <>
      <GlobalStyle />
      <Page>
        <AppShell>
          <Nav>
            <Tab href="#">Home</Tab>
            <Tab href="#" $active>Analysis</Tab>
            <Tab href="#">Data</Tab>
            <Tab href="#">Results</Tab>
          </Nav>
          <Body>
            <Sidebar>
              {"SOUTH SUDAN".split("").map((c, i) => <Letter key={i}>{c}</Letter>)}
            </Sidebar>
            <Main>
              <Summary>
                <SummaryRow>
                  <MapThumb><RegionMap /></MapThumb>
                  <Story>{story.map((l) => <Line key={l}>{l}</Line>)}</Story>
                </SummaryRow>
                <Actions>
                  <ActionButton>Browse data</ActionButton>
                  <ActionButton>Generate new data</ActionButton>
                  <ActionButton>Browse CAG</ActionButton>
                  <ActionButton>Load New CAG</ActionButton>
                </Actions>
              </Summary>
              <Panels>
                <Panel $tone="gold">
                  <PanelHead>
                    <PanelTitle>QUESTIONS</PanelTitle>
                    <PanelLinks>
                      <LinkButton $danger>- DELETE QUESTION</LinkButton>
                      <LinkButton>+ ADD NEW QUESTION</LinkButton>
                    </PanelLinks>
                  </PanelHead>
                  <Items>
                    <li><ItemButton $tone="gold">Test Question2</ItemButton></li>
                    <li><ItemButton $tone="gold" $state="on">Is flooding expected in the Pongo Basin area during the upcoming growing season (April-August) 2017?</ItemButton></li>
                  </Items>
                </Panel>
                <Panel $tone="blue">
                  <PanelHead>
                    <PanelTitle>TASKS</PanelTitle>
                    <PanelLinks>
                      <LinkButton $danger>- DELETE TASK</LinkButton>
                      <LinkButton>+ ADD NEW TASK</LinkButton>
                    </PanelLinks>
                  </PanelHead>
                  <Items>
                    <li><ItemButton $tone="blue" $state="done"><Check />Select Variables</ItemButton></li>
                    <li><ItemButton $tone="blue" $state="done"><Check />Select Datasets</ItemButton></li>
                    <li><ItemButton $tone="blue" $state="on"><Hourglass />Compose Models</ItemButton></li>
                    <li><ItemButton $tone="blue">Run Models</ItemButton></li>
                    <li><ItemButton $tone="blue">Visualize Results</ItemButton></li>
                  </Items>
                </Panel>
                <Panel $tone="rust">
                  <PanelHead><PanelTitle>ACTIVITIES</PanelTitle></PanelHead>
                  <Items>
                    <li><ItemButton $tone="rust" $state="done"><Check />Choose Models</ItemButton></li>
                    <li><ItemButton $tone="rust">Compose and Select Workflow</ItemButton></li>
                  </Items>
                </Panel>
              </Panels>
              <Selections>
                <SelectionsHead>YOUR SELECTIONS</SelectionsHead>
                <SelectionsBody>
                  {groups.map((g) => (
                    <div key={g.title}>
                      <GroupTitle>{g.title}</GroupTitle>
                      <GroupList>{g.items.map((t, i) => <li key={i}>{t}</li>)}</GroupList>
                    </div>
                  ))}
                </SelectionsBody>
              </Selections>
            </Main>
          </Body>
        </AppShell>
        <DatasetBrowser />
        <CausalGraph />
        <Workflow />
        <ResultsMap />
        <ArrowLayer width="1423" height="769" aria-hidden="true">
          <Arrow from={[65, 248]} to={[105, 176]} />
          <Arrow from={[348, 241]} to={[908, 194]} />
          <Arrow from={[1162, 386]} to={[1113, 451]} />
          <Arrow from={[749, 488]} to={[734, 561]} />
        </ArrowLayer>
        {badges.map(([n, x, y]) => <Badge key={n} $x={x} $y={y}>{n}</Badge>)}
      </Page>
    </>
  );
}
